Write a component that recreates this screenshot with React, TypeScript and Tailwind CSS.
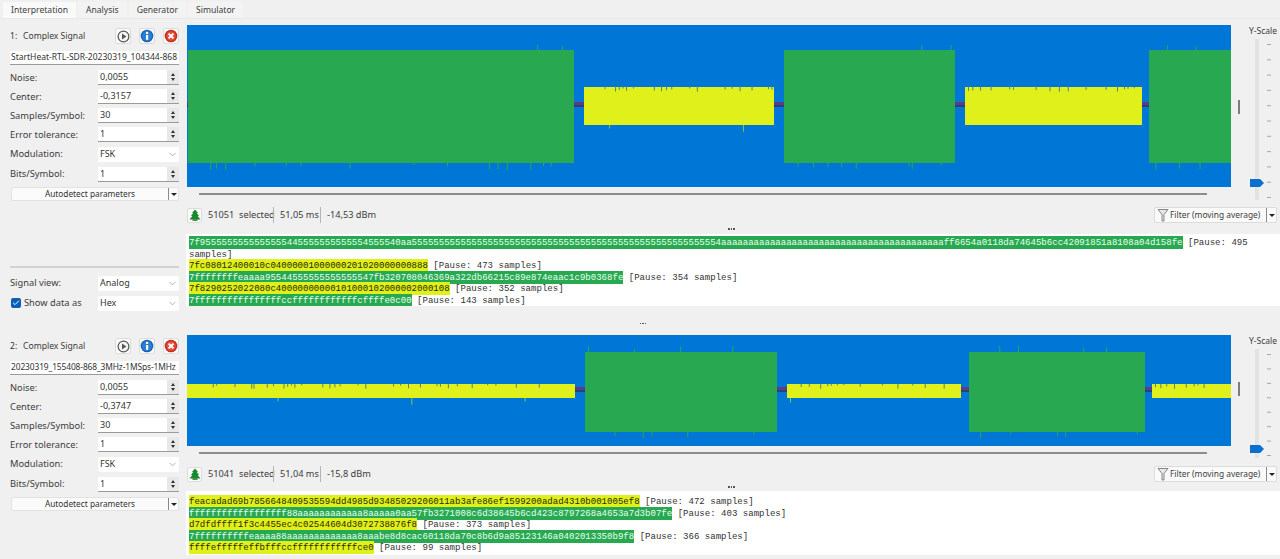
import React from "react";
import { ChevronDown, Check } from "lucide-react";

type Seg = { from: number; to: number; kind: "wide" | "narrow" };
type TextLine = { hex: string; kind: "wide" | "narrow"; pause: number };

const labelCls = "text-[9.3px] text-[#3c3c3c]";

const SmallButton: React.FC<{ children: React.ReactNode }> = ({ children }) => (
  <button className="flex h-[16px] w-[16px] items-center justify-center rounded-[2px] border border-[#dcdcdc] bg-[#fafafa]">
    {children}
  </button>
);

const PlayIcon = () => (
  <svg width="13" height="13" viewBox="0 0 13 13">
    <circle cx="6.5" cy="6.5" r="5.4" fill="#f4f4f4" stroke="#555" strokeWidth="1.2" />
    <path d="M5 3.6 L9.4 6.5 L5 9.4 Z" fill="#555" />
  </svg>
);

const InfoIcon = () => (
  <svg width="14" height="14" viewBox="0 0 14 14">
    <circle cx="7" cy="7" r="6.3" fill="#1763b5" />
    <circle cx="7" cy="7" r="5" fill="#2b7fd0" />
    <rect x="6" y="6" width="2.2" height="4.8" fill="#fff" />
    <circle cx="7.1" cy="3.9" r="1.2" fill="#fff" />
  </svg>
);

const CloseIcon = () => (
  <svg width="14" height="14" viewBox="0 0 14 14">
    <circle cx="7" cy="7" r="6.3" fill="#c62b1c" />
    <circle cx="7" cy="7" r="4.8" fill="#e0503d" />
    <path d="M4.6 4.6 L9.4 9.4 M9.4 4.6 L4.6 9.4" stroke="#fff" strokeWidth="2" />
  </svg>
);

const TreeIcon = () => (
  <svg width="12" height="12" viewBox="0 0 12 12">
    <path d="M6 0.5 L9 4 H7.8 L10 7 H8.6 L11.5 10.5 H0.5 L3.4 7 H2 L4.2 4 H3 Z" fill="#178a2a" />
    <rect x="3.5" y="10.5" width="5" height="1.2" fill="#0d5e1b" />
  </svg>
);

const SpinBox: React.FC<{ value: string }> = ({ value }) => (
  <div className="flex h-[15px] w-[81px] items-center border-b border-[#9a9a9a] bg-white pl-[2px] text-[9px] text-[#333]">
    <span className="flex-1">{value}</span>
    <div className="flex h-full w-[12px] flex-col items-center justify-center gap-[2px] bg-[#e8e8e8]">
      <span className="h-0 w-0 border-x-[2.5px] border-b-[3px] border-x-transparent border-b-[#333]" />
      <span className="h-0 w-0 border-x-[2.5px] border-t-[3px] border-x-transparent border-t-[#333]" />
    </div>
  </div>
);

const ComboBox: React.FC<{ value: string }> = ({ value }) => (
  <div className="flex h-[15px] w-[81px] items-center justify-between rounded-[2px] bg-white pl-[2px] pr-[1px] text-[9px] text-[#333]">
    <span>{value}</span>
    <ChevronDown size={11} color="#8a8a8a" strokeWidth={1.4} />
  </div>
);

const ParamRow: React.FC<{ label: string; h: string; children: React.ReactNode }> = ({ label, h, children }) => (
  <div className={`flex items-center justify-between ${h}`}>
    <span className={labelCls}>{label}</span>
    {children}
  </div>
);

const SideControls: React.FC<{
  index: number;
  file: string;
  fileCls: string;
  center: string;
  showView: boolean;
}> = ({ index, file, fileCls, center, showView }) => (
  <div className="flex w-[187px] shrink-0 flex-col pl-[10px] pr-[8px] pt-[6px]">
    <div className="flex h-[22px] items-center">
      <span className="w-[13px] text-[8.5px] text-[#333]">{index}:</span>
      <span className="text-[8.6px] text-[#3c3c3c]">Complex Signal</span>
      <div className="ml-auto flex gap-[8px]">
        <SmallButton><PlayIcon /></SmallButton>
        <SmallButton><InfoIcon /></SmallButton>
        <SmallButton><CloseIcon /></SmallButton>
      </div>
    </div>
    <div className={`mt-[4px] flex h-[14px] items-center overflow-hidden whitespace-nowrap border-b border-[#9a9a9a] bg-white pl-[1px] text-[#333] ${fileCls}`}>
      {file}
    </div>
    <div className="mt-[3px]">
      <ParamRow label="Noise:" h="h-[19px]"><SpinBox value="0,0055" /></ParamRow>
      <ParamRow label="Center:" h="h-[19px]"><SpinBox value={center} /></ParamRow>
      <ParamRow label="Samples/Symbol:" h="h-[19px]"><SpinBox value="30" /></ParamRow>
      <ParamRow label="Error tolerance:" h="h-[19px]"><SpinBox value="1" /></ParamRow>
      <ParamRow label="Modulation:" h="h-[20px]"><ComboBox value="FSK" /></ParamRow>
      <ParamRow label="Bits/Symbol:" h="h-[20px]"><SpinBox value="1" /></ParamRow>
    </div>
    <div className="ml-[1px] mt-[3px] flex h-[14px] items-center rounded-[2px] border border-[#e2e2e2] bg-[#fbfbfb] text-[8.3px] text-[#333]">
      <span className="flex-1 text-center">Autodetect parameters</span>
      <span className="flex h-full w-[10px] items-center justify-center border-l border-[#8a8a8a]">
        <span className="h-0 w-0 border-x-[3px] border-t-[3px] border-x-transparent border-t-[#222]" />
      </span>
    </div>
    {showView && (
      <div className="mt-auto pb-[5px]">
        <div className="mb-[5px] h-[2px] bg-[#d2d2d2]" />
        <ParamRow label="Signal view:" h="h-[20px]"><ComboBox value="Analog" /></ParamRow>
        <div className="flex h-[20px] items-center justify-between">
          <div className="ml-px flex items-center gap-[3px]">
            <span className="flex h-[10px] w-[10px] items-center justify-center rounded-[2px] bg-[#0b5fb8]">
              <Check size={8} color="#fff" strokeWidth={3} />
            </span>
            <span className={labelCls}>Show data as</span>
          </div>
          <ComboBox value="Hex" />
        </div>
      </div>
    )}
  </div>
);

// cheap repeatable noise so the spikes don't shift between renders
const rand = (n: number) => {
  const v = Math.sin(n * 127.1 + 11.7) * 43758.5453;
  return v - Math.floor(v);
};

const Waveform: React.FC<{
  height: number;
  segs: Seg[];
  wide: [number, number];
  narrow: [number, number];
  seed: number;
}> = ({ height, segs, wide, narrow, seed }) => {
  const mid = (narrow[0] + narrow[1]) / 2 - 2;
  let n = seed;
  return (
    <svg width="1044" height={height} className="block shrink-0 bg-[#0077d7]">
      <rect x="0" y={mid - 2} width="1044" height="4" fill="#5b3f86" />
      <rect x="0" y={mid + 1} width="1044" height="2" fill="#2f3f70" />
      {segs.map((s) => {
        const isWide = s.kind === "wide";
        const [top, bottom] = isWide ? wide : narrow;
        const fill = isWide ? "#28a850" : "#e0f01a";
        const spikes: React.ReactNode[] = [];
        for (let x = s.from + 3; x < s.to - 2; x += (isWide ? 3 : 2) + rand(n++) * (isWide ? 9 : 7)) {
          const r = rand(n++);
          if (isWide && r > 0.62) {
            const len = 2 + rand(n++) * 5;
            spikes.push(<rect key={`b${x}`} x={x} y={bottom} width="1" height={len} fill="#28a850" />);
          } else if (isWide && r < 0.08) {
            const len = 3 + rand(n++) * 4;
            spikes.push(<rect key={`t${x}`} x={x} y={top - len} width="1" height={len} fill="#28a850" />);
          } else if (!isWide && r < 0.4) {
            const len = 1 + rand(n++) * 4;
            spikes.push(<rect key={`t${x}`} x={x} y={top} width="1" height={len} fill="#4f8f70" />);
          } else if (!isWide && r > 0.97) {
            const len = 3 + rand(n++) * 4;
            spikes.push(<rect key={`b${x}`} x={x} y={bottom} width="1" height={len} fill="#7fc840" />);
          }
        }
        return (
          <g key={s.from}>
            <rect x={s.from} y={top} width={s.to - s.from} height={bottom - top} fill={fill} />
            {spikes}
          </g>
        );
      })}
    </svg>
  );
};

const YScale: React.FC<{ trackH: number; handleTop: string; ticks: number; thumbY: number }> = ({
  trackH,
  handleTop,
  ticks,
  thumbY,
}) => (
  <div className="flex w-[49px] shrink-0">
    <div className={`ml-[7px] h-[14px] w-[2px] bg-[#7d7d7d] ${handleTop}`} />
    <div className="ml-[8px] flex flex-col">
      <span className="ml-[1px] h-[14px] whitespace-nowrap text-[8.5px] leading-[12px] text-[#3c3c3c]">Y-Scale</span>
      <svg width="24" height={trackH} className="block">
        <rect x="7" y="0" width="4" height={trackH} fill="#e3e3e3" />
        {Array.from({ length: ticks }, (_, i) => (
          <rect key={i} x="19" y={5 + (i * (trackH - 8)) / (ticks - 1)} width="4" height="1" fill="#a8a8a8" />
        ))}
        <path d={`M2 ${thumbY - 4} H12 L16 ${thumbY} L12 ${thumbY + 4} H2 Z`} fill="#0b6fd0" />
      </svg>
    </div>
  </div>
);

const StatusRow: React.FC<{ count: string; ms: string; dbm: string }> = ({ count, ms, dbm }) => (
  <div className="flex h-[18px] items-center pr-[3px] text-[9.2px] text-[#3c3c3c]">
    <span className="flex h-[15px] w-[15px] items-center justify-center rounded-[2px] border border-[#dcdcdc] bg-[#fafafa]">
      <TreeIcon />
    </span>
    <span className="ml-[6px] w-[60px] whitespace-nowrap">{count}&nbsp; selected</span>
    <span className="ml-[5px] h-[16px] w-px bg-[#b5b5b5]" />
    <span className="ml-[6px] w-[40px] whitespace-nowrap">{ms}</span>
    <span className="h-[16px] w-px bg-[#b5b5b5]" />
    <span className="ml-[6px] whitespace-nowrap">{dbm}</span>
    <div className="ml-auto flex h-[16px] w-[123px] items-center rounded-[2px] border border-[#dcdcdc] bg-[#fafafa]">
      <svg width="12" height="14" viewBox="0 0 12 14" className="ml-[2px] shrink-0">
        <path d="M1 1.5 H11 L7 6.5 V13 H5 V6.5 Z" fill="#e8e8e8" stroke="#7a7a7a" strokeWidth="0.9" />
      </svg>
      <span className="ml-[1px] flex-1 whitespace-nowrap text-[8.4px]">Filter (moving average)</span>
      <span className="flex h-full w-[10px] items-center justify-center border-l border-[#8a8a8a]">
        <span className="h-0 w-0 border-x-[3px] border-t-[3px] border-x-transparent border-t-[#222]" />
      </span>
    </div>
  </div>
);

const Dots = () => (
  <span className="flex gap-[1px]">
    <span className="h-[1.5px] w-[1.5px] bg-[#555]" />
    <span className="h-[1.5px] w-[1.5px] bg-[#555]" />
    <span className="h-[1.5px] w-[1.5px] bg-[#555]" />
  </span>
);

const DemodText: React.FC<{ lines: TextLine[]; h: string; pad: string }> = ({ lines, h, pad }) => (
  <div className={`${h} ${pad} -ml-px overflow-hidden bg-white pl-[3px] font-['Liberation_Mono',monospace] text-[9.05px] leading-[11.5px] text-[#333]`}>
    {lines.map((l) => (
      <div key={l.hex}>
        <span className={l.kind === "wide" ? "bg-[#28a850] py-[1px] text-[#e9fff0]" : "bg-[#e0f01a] py-[1px] text-[#2a2a00]"}>
          {l.hex}
        </span>{" "}
        [Pause: {l.pause} samples]
      </div>
    ))}
  </div>
);

const textOne: TextLine[] = [
  {
    hex: "7f95555555555555554455555555555545555" + "40aa" + "55555555555555555555555555555555555555555555555555555555" + "4" + "aaaaaaaaaaaaaaaaaaaaaaaaaaaaaaaaaaaaaaaaa" + "ff6654a0118da74645b6cc42091851a8108a04d158fe",
    kind: "wide",
    pause: 495,
  },
  { hex: "7fc08012400010c04000001000000201020000000888", kind: "narrow", pause: 473 },
  { hex: "7ffffffffeaaaa95544555555555555547fb320708046369a322db66215c89e874eaac1c9b0368fe", kind: "wide", pause: 354 },
  { hex: "7f8290252022080c40000000000101000102000002000108", kind: "narrow", pause: 352 },
  { hex: "7ffffffffffffffffccffffffffffffcffffe0c00", kind: "wide", pause: 143 },
];

const textTwo: TextLine[] = [
  { hex: "feacadad69b7856648409535594dd4985d93485029206011ab3afe86ef1599200adad4310b001005ef8", kind: "narrow", pause: 472 },
  { hex: "ffffffffffffffffff88aaaaaaaaaaaa8aaaaa0aa57fb3271008c6d38645b6cd423c8797268a4653a7d3b07fe", kind: "wide", pause: 403 },
  { hex: "d7dfdffff1f3c4455ec4c02544604d3072738876f8", kind: "narrow", pause: 373 },
  { hex: "7ffffffffffeaaaa88aaaaaaaaaaaaa8aaabe8d8cac60118da70c8b6d9a85123146a0402013350b9f8", kind: "wide", pause: 366 },
  { hex: "ffffefffffeffbfffccffffffffffffce0", kind: "narrow", pause: 99 },
];

const tabs = ["Interpretation", "Analysis", "Generator", "Simulator"];

export default function App() {
  return (
    <div className="flex h-[559px] w-[1280px] flex-col overflow-hidden bg-[#f0f0f0] font-['Noto_Sans',sans-serif]">
      {/* Tabs */}
      <div className="flex h-[19px] shrink-0 items-end gap-[2px] border-b border-[#e8e8e8] pl-[3px]">
        {tabs.map((t, i) => (
          <div
            key={t}
            className={`flex h-[16px] items-center px-[8px] text-[8.6px] text-[#3c3c3c] ${i === 0 ? "bg-[#f9f9f9]" : "bg-[#f3f3f3]"}`}
          >
            {t}
          </div>
        ))}
      </div>

      {/* Signal 1 */}
      <div className="flex h-[299px] shrink-0">
        <SideControls index={1} file="StartHeat-RTL-SDR-20230319_104344-868" fileCls="text-[8.5px]" center="-0,3157" showView />
        <div className="flex min-w-0 flex-1 flex-col pt-[6px]">
          <div className="flex h-[181px] shrink-0">
            <div className="w-[1044px] shrink-0">
              <Waveform
                height={162}
                wide={[25, 138]}
                narrow={[62, 100]}
                seed={3}
                segs={[
                  { from: 1, to: 387, kind: "wide" },
                  { from: 397, to: 587, kind: "narrow" },
                  { from: 597, to: 768, kind: "wide" },
                  { from: 778, to: 955, kind: "narrow" },
                  { from: 962, to: 1044, kind: "wide" },
                ]}
              />
              <div className="ml-[12px] mt-[6px] h-[2px] w-[1008px] bg-[#8c8c8c]" />
            </div>
            <YScale trackH={161} handleTop="mt-[75px]" ticks={11} thumbY={144} />
          </div>
          <StatusRow count="51051" ms="51,05 ms" dbm="-14,53 dBm" />
          <div className="flex h-[10px] shrink-0 items-center justify-center pr-[4px]"><Dots /></div>
          <DemodText lines={textOne} h="h-[72px]" pad="pt-[3px]" />
        </div>
      </div>

      {/* Splitter */}
      <div className="flex h-[11px] shrink-0 items-center justify-center pl-[6px]"><Dots /></div>

      {/* Signal 2 */}
      <div className="flex min-h-0 flex-1">
        <SideControls index={2} file="20230319_155408-868_3MHz-1MSps-1MHz" fileCls="text-[8.4px] tracking-[-0.1px]" center="-0,3747" showView={false} />
        <div className="flex min-w-0 flex-1 flex-col pt-[6px]">
          <div className="flex h-[130px] shrink-0">
            <div className="w-[1044px] shrink-0">
              <Waveform
                height={111}
                wide={[17, 97]}
                narrow={[49, 63]}
                seed={90}
                segs={[
                  { from: 0, to: 388, kind: "narrow" },
                  { from: 398, to: 590, kind: "wide" },
                  { from: 600, to: 774, kind: "narrow" },
                  { from: 782, to: 958, kind: "wide" },
                  { from: 965, to: 1044, kind: "narrow" },
                ]}
              />
              <div className="ml-[12px] mt-[6px] h-[2px] w-[1008px] bg-[#8c8c8c]" />
            </div>
            <YScale trackH={109} handleTop="mt-[47px]" ticks={8} thumbY={100} />
          </div>
          <StatusRow count="51041" ms="51,04 ms" dbm="-15,8 dBm" />
          <div className="flex h-[8px] shrink-0 items-center justify-center pr-[4px]"><Dots /></div>
          <DemodText lines={textTwo} h="h-[64px]" pad="pt-[5px]" />
        </div>
      </div>
    </div>
  );
}
